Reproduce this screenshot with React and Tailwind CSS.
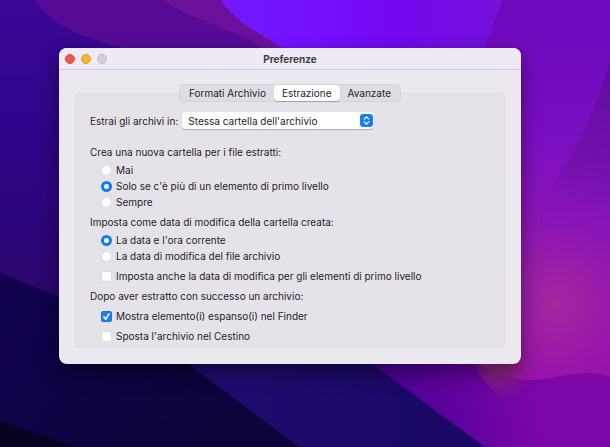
import { useState } from "react";

const tabs = ["Formati Archivio", "Estrazione", "Avanzate"];

const folderOptions = [
  { value: "never", label: "Mai" },
  { value: "multiple", label: "Solo se c'è più di un elemento di primo livello" },
  { value: "always", label: "Sempre" },
];

const dateOptions = [
  { value: "current", label: "La data e l'ora corrente" },
  { value: "archive", label: "La data di modifica del file archivio" },
];

const Wallpaper = () => (
  <svg
    className="absolute inset-0 w-full h-full"
    viewBox="0 0 610 447"
    preserveAspectRatio="xMidYMid slice"
    aria-hidden="true"
  >
    <defs>
      <linearGradient id="indigo" x1="0" y1="0" x2="0" y2="1">
        <stop offset="0" stopColor="#3a0794" />
        <stop offset="0.3" stopColor="#30058a" />
        <stop offset="0.65" stopColor="#2c066f" />
      </linearGradient>
      <linearGradient id="violet" gradientUnits="userSpaceOnUse" x1="230" y1="0" x2="500" y2="0">
        <stop offset="0" stopColor="#7318ff" />
        <stop offset="0.3" stopColor="#7410ff" />
        <stop offset="0.6" stopColor="#7408f0" />
        <stop offset="1" stopColor="#7211d8" />
      </linearGradient>
      <linearGradient id="right" gradientUnits="userSpaceOnUse" x1="0" y1="0" x2="0" y2="380">
        <stop offset="0" stopColor="#6d08bc" />
        <stop offset="0.35" stopColor="#7a0ec2" />
        <stop offset="0.6" stopColor="#8c16b6" />
        <stop offset="1" stopColor="#9a12aa" />
      </linearGradient>
      <linearGradient id="ridge" gradientUnits="userSpaceOnUse" x1="600" y1="60" x2="570" y2="240">
        <stop offset="0" stopColor="#5c0d9c" />
        <stop offset="0.6" stopColor="#7611ae" />
        <stop offset="1" stopColor="#8414b6" stopOpacity="0" />
      </linearGradient>
      <linearGradient id="slope" gradientUnits="userSpaceOnUse" x1="400" y1="420" x2="540" y2="390">
        <stop offset="0" stopColor="#4b0095" />
        <stop offset="0.5" stopColor="#6403a0" />
        <stop offset="1" stopColor="#7c06a6" />
      </linearGradient>
      <linearGradient id="navy" gradientUnits="userSpaceOnUse" x1="220" y1="400" x2="440" y2="400">
        <stop offset="0" stopColor="#200b70" />
        <stop offset="1" stopColor="#1a0864" />
      </linearGradient>
      <linearGradient id="night" gradientUnits="userSpaceOnUse" x1="0" y1="280" x2="200" y2="447">
        <stop offset="0" stopColor="#12024f" />
        <stop offset="1" stopColor="#0d043a" />
      </linearGradient>
      <radialGradient id="glow" gradientUnits="userSpaceOnUse" cx="556" cy="304" r="80">
        <stop offset="0" stopColor="#a3279f" />
        <stop offset="1" stopColor="#a3279f" stopOpacity="0" />
      </radialGradient>
      <radialGradient id="ember" gradientUnits="userSpaceOnUse" cx="498" cy="368" r="34">
        <stop offset="0" stopColor="#8e2878" />
        <stop offset="1" stopColor="#8e2878" stopOpacity="0" />
      </radialGradient>
    </defs>
    <rect width="610" height="447" fill="url(#indigo)" />
    <path d="M35 0C52 26 78 36 120 47L290 120H610V0Z" fill="#560b97" />
    <path d="M163 0C190 20 235 28 265 50L400 110V0Z" fill="#6b109b" />
    <path d="M221 0C240 28 262 32 284 50L400 110H610V0Z" fill="url(#violet)" />
    <path d="M503 0C494 20 488 36 484 56L400 220V447H610V0Z" fill="url(#right)" />
    <path d="M610 58C598 108 572 160 540 204V260H610Z" fill="url(#ridge)" />
    <rect x="470" y="220" width="140" height="165" fill="url(#glow)" />
    <path d="M360 355L470 360C520 386 535 380 550 378C572 374 590 370 610 377V447H480Z" fill="url(#slope)" />
    <path d="M468 355C480 380 492 390 512 408H560V350Z" fill="url(#ember)" />
    <path d="M180 357L362 357L485 447H290Z" fill="url(#navy)" />
    <path d="M0 273L62 298L179 357L299 447H0Z" fill="url(#night)" />
    <path d="M0 421L76 447H0Z" fill="#07021f" />
  </svg>
);

const Radio = ({ name, option, selected, onSelect }) => (
  <label className="flex items-center gap-1 h-4">
    <input
      type="radio"
      name={name}
      value={option.value}
      checked={selected === option.value}
      onChange={() => onSelect(option.value)}
      className="appearance-none size-[11px] shrink-0 rounded-full bg-white border border-[#dcd9e1] checked:border-[3px] checked:border-[#157bf0]"
    />
    {option.label}
  </label>
);

const Checkbox = ({ label, checked, onChange }) => (
  <label className="flex items-center gap-1 h-4 mt-1 ml-[11px]">
    <span className="grid size-[11px] shrink-0">
      <input
        type="checkbox"
        checked={checked}
        onChange={(e) => onChange(e.target.checked)}
        className="appearance-none col-start-1 row-start-1 size-[11px] rounded-xs bg-white border border-[#dcd9e1] checked:bg-[#1c7ff0] checked:border-[#1676e4]"
      />
      {checked && (
        <svg
          className="col-start-1 row-start-1 size-[11px] pointer-events-none"
          viewBox="0 0 11 11"
          fill="none"
          stroke="white"
          strokeWidth="1.6"
          strokeLinecap="round"
          strokeLinejoin="round"
        >
          <path d="M3 5.9L4.8 8.2L8.1 2.9" />
        </svg>
      )}
    </span>
    {label}
  </label>
);

const App = () => {
  const [activeTab, setActiveTab] = useState("Estrazione");
  const [destination, setDestination] = useState("same");
  const [folder, setFolder] = useState("multiple");
  const [date, setDate] = useState("current");
  const [applyToItems, setApplyToItems] = useState(false);
  const [showInFinder, setShowInFinder] = useState(true);
  const [moveToTrash, setMoveToTrash] = useState(false);

  return (
    <div className="relative min-h-screen overflow-hidden bg-[#2c066f] pt-12 pb-20 pl-[59px] pr-[89px] font-['Inter','Liberation_Sans',sans-serif] text-[10px] leading-4 text-[#252329]">
      <Wallpaper />
      <main className="relative rounded-lg bg-[#ebe8f0] shadow-[0_8px_20px_rgba(0,0,0,0.45)]">
        <header className="grid grid-cols-[1fr_auto_1fr] items-center h-[22px] px-1.5 rounded-t-lg bg-[#efebf6] border-b border-[#cfccd9]">
          <div className="flex gap-1.5">
            <button aria-label="Chiudi" className="size-2.5 rounded-full bg-[#f2564f] border border-[#d94b49]" />
            <button aria-label="Riduci" className="size-2.5 rounded-full bg-[#f8b526] border border-[#dc9c25]" />
            <button aria-label="Ingrandisci" disabled className="size-2.5 rounded-full bg-[#d2cfd6] border border-[#bdbac2]" />
          </div>
          <h1 className="text-[10px] font-bold text-[#3e3b43]">Preferenze</h1>
        </header>

        <div className="px-4 pt-3.5 pb-4">
          <div
            role="tablist"
            className="relative z-10 flex w-fit mx-auto -mb-[9px] h-[18px] px-px rounded-sm bg-[#dfdce4] border border-[#d6d3dc]"
          >
            {tabs.map((tab) => (
              <button
                key={tab}
                role="tab"
                aria-selected={tab === activeTab}
                onClick={() => setActiveTab(tab)}
                className={`px-2 rounded-sm ${
                  tab === activeTab ? "bg-white shadow-[0_1px_1px_rgba(0,0,0,0.25)]" : ""
                }`}
              >
                {tab}
              </button>
            ))}
          </div>

          <section className="rounded-sm bg-[#e5e2e9] border border-[#dedbe3] px-3.5 pt-[18px] pb-[3px]">
            <div className="flex items-center gap-1 mb-[15px]">
              <label htmlFor="destination">Estrai gli archivi in:</label>
              <div className="relative w-48">
                <select
                  id="destination"
                  value={destination}
                  onChange={(e) => setDestination(e.target.value)}
                  className="block appearance-none w-full h-[17px] pl-1.5 pr-5 rounded-sm bg-white shadow-[0_1px_1px_rgba(0,0,0,0.25)]"
                >
                  <option value="same">Stessa cartella dell'archivio</option>
                  <option value="ask">Chiedi ogni volta</option>
                </select>
                <svg
                  className="absolute right-px top-0.5 size-[13px] pointer-events-none"
                  viewBox="0 0 13 13"
                  fill="none"
                >
                  <rect width="13" height="13" rx="3" fill="#1a7fee" />
                  <path
                    d="M4.2 5.2L6.5 2.9L8.8 5.2M4.2 7.8L6.5 10.1L8.8 7.8"
                    stroke="white"
                    strokeWidth="1.2"
                    strokeLinecap="round"
                    strokeLinejoin="round"
                  />
                </svg>
              </div>
            </div>

            <fieldset>
              <legend>Crea una nuova cartella per i file estratti:</legend>
              <div className="mt-0.5 ml-[11px]">
                {folderOptions.map((option) => (
                  <Radio key={option.value} name="folder" option={option} selected={folder} onSelect={setFolder} />
                ))}
              </div>
            </fieldset>

            <fieldset className="mt-1">
              <legend>Imposta come data di modifica della cartella creata:</legend>
              <div className="mt-0.5 ml-[11px]">
                {dateOptions.map((option) => (
                  <Radio key={option.value} name="date" option={option} selected={date} onSelect={setDate} />
                ))}
              </div>
              <Checkbox
                label="Imposta anche la data di modifica per gli elementi di primo livello"
                checked={applyToItems}
                onChange={setApplyToItems}
              />
            </fieldset>

            <fieldset className="mt-1">
              <legend>Dopo aver estratto con successo un archivio:</legend>
              <Checkbox
                label="Mostra elemento(i) espanso(i) nel Finder"
                checked={showInFinder}
                onChange={setShowInFinder}
              />
              <Checkbox label="Sposta l'archivio nel Cestino" checked={moveToTrash} onChange={setMoveToTrash} />
            </fieldset>
          </section>
        </div>
      </main>
    </div>
  );
};

export default App;
